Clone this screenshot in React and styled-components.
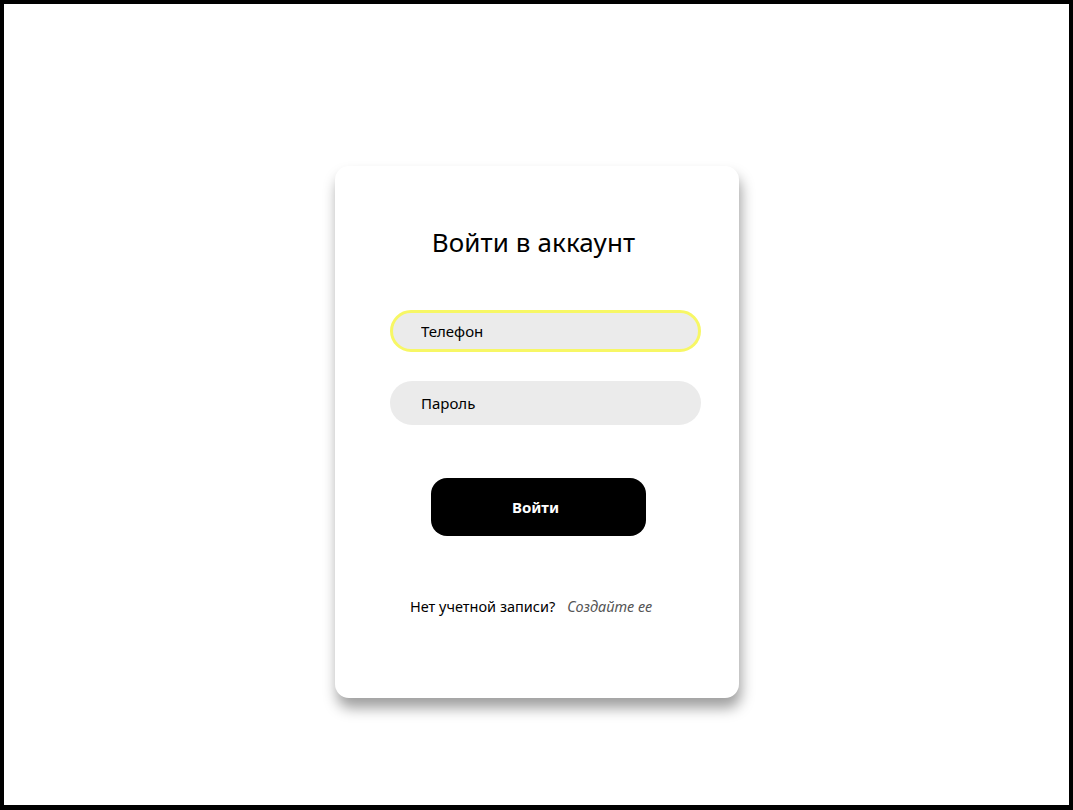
import { createGlobalStyle } from 'styled-components';
import styled from 'styled-components';

const GlobalStyle = createGlobalStyle`
  html, body {
    margin: 0;
    padding: 0;
    background: #fff;
  }
  * {
    box-sizing: border-box;
  }
`;

const Frame = styled.div`
  width: 100vw;
  height: 100vh;
  border: 4px solid #000;
  border-bottom-width: 5px;
  background: #fff;
  display: flex;
  justify-content: center;
  align-items: flex-start;
  padding-top: 162px;
  font-family: 'Noto Sans', 'Open Sans', sans-serif;
`;

const Card = styled.form`
  width: 404px;
  height: 532px;
  background: #fff;
  border-radius: 14px;
  box-shadow: 2px 10px 14px rgba(0, 0, 0, 0.38);
  display: flex;
  flex-direction: column;
  align-items: center;
  padding-top: 60px;
`;

const Title = styled.h1`
  margin: 0 6px 52px 0;
  font-size: 26px;
  font-weight: 400;
  line-height: 32px;
  color: #000;
  letter-spacing: 0.1px;
`;

const Field = styled.input`
  width: 311px;
  height: ${p => (p.$focused ? '42px' : '44px')};
  margin: 0 0 ${p => p.$gap}px 18px;
  border: ${p => (p.$focused ? '3px solid #f7f765' : '3px solid transparent')};
  border-radius: 22px;
  background: #ebebeb;
  padding: 0 0 0 28px;
  font-family: inherit;
  font-size: 15px;
  color: #000;
  outline: none;

  &::placeholder {
    color: #000;
  }
`;

const Submit = styled.button`
  width: 215px;
  height: 58px;
  margin-left: 4px;
  padding: 0 6px 0 0;
  border: none;
  border-radius: 16px;
  background: #000;
  color: #fff;
  font-family: inherit;
  font-size: 15px;
  font-weight: 700;
  cursor: pointer;
`;

const Footer = styled.p`
  margin: 60px 0 0 -11px;
  display: flex;
  gap: 12px;
  font-size: 14.5px;
  color: #000;
`;

const CreateLink = styled.a`
  font-style: italic;
  color: #555;
  text-decoration: none;
`;

const App = () => {
  return (
    <>
      <GlobalStyle />
      <Frame>
        <Card onSubmit={e => e.preventDefault()}>
          <Title>Войти в аккаунт</Title>
          <Field $focused $gap={29} placeholder="Телефон" />
          <Field $gap={53} type="password" placeholder="Пароль" />
          <Submit type="submit">Войти</Submit>
          <Footer>
            Нет учетной записи?
            <CreateLink href="#">Создайте ее</CreateLink>
          </Footer>
        </Card>
      </Frame>
    </>
  );
};

export default App;
